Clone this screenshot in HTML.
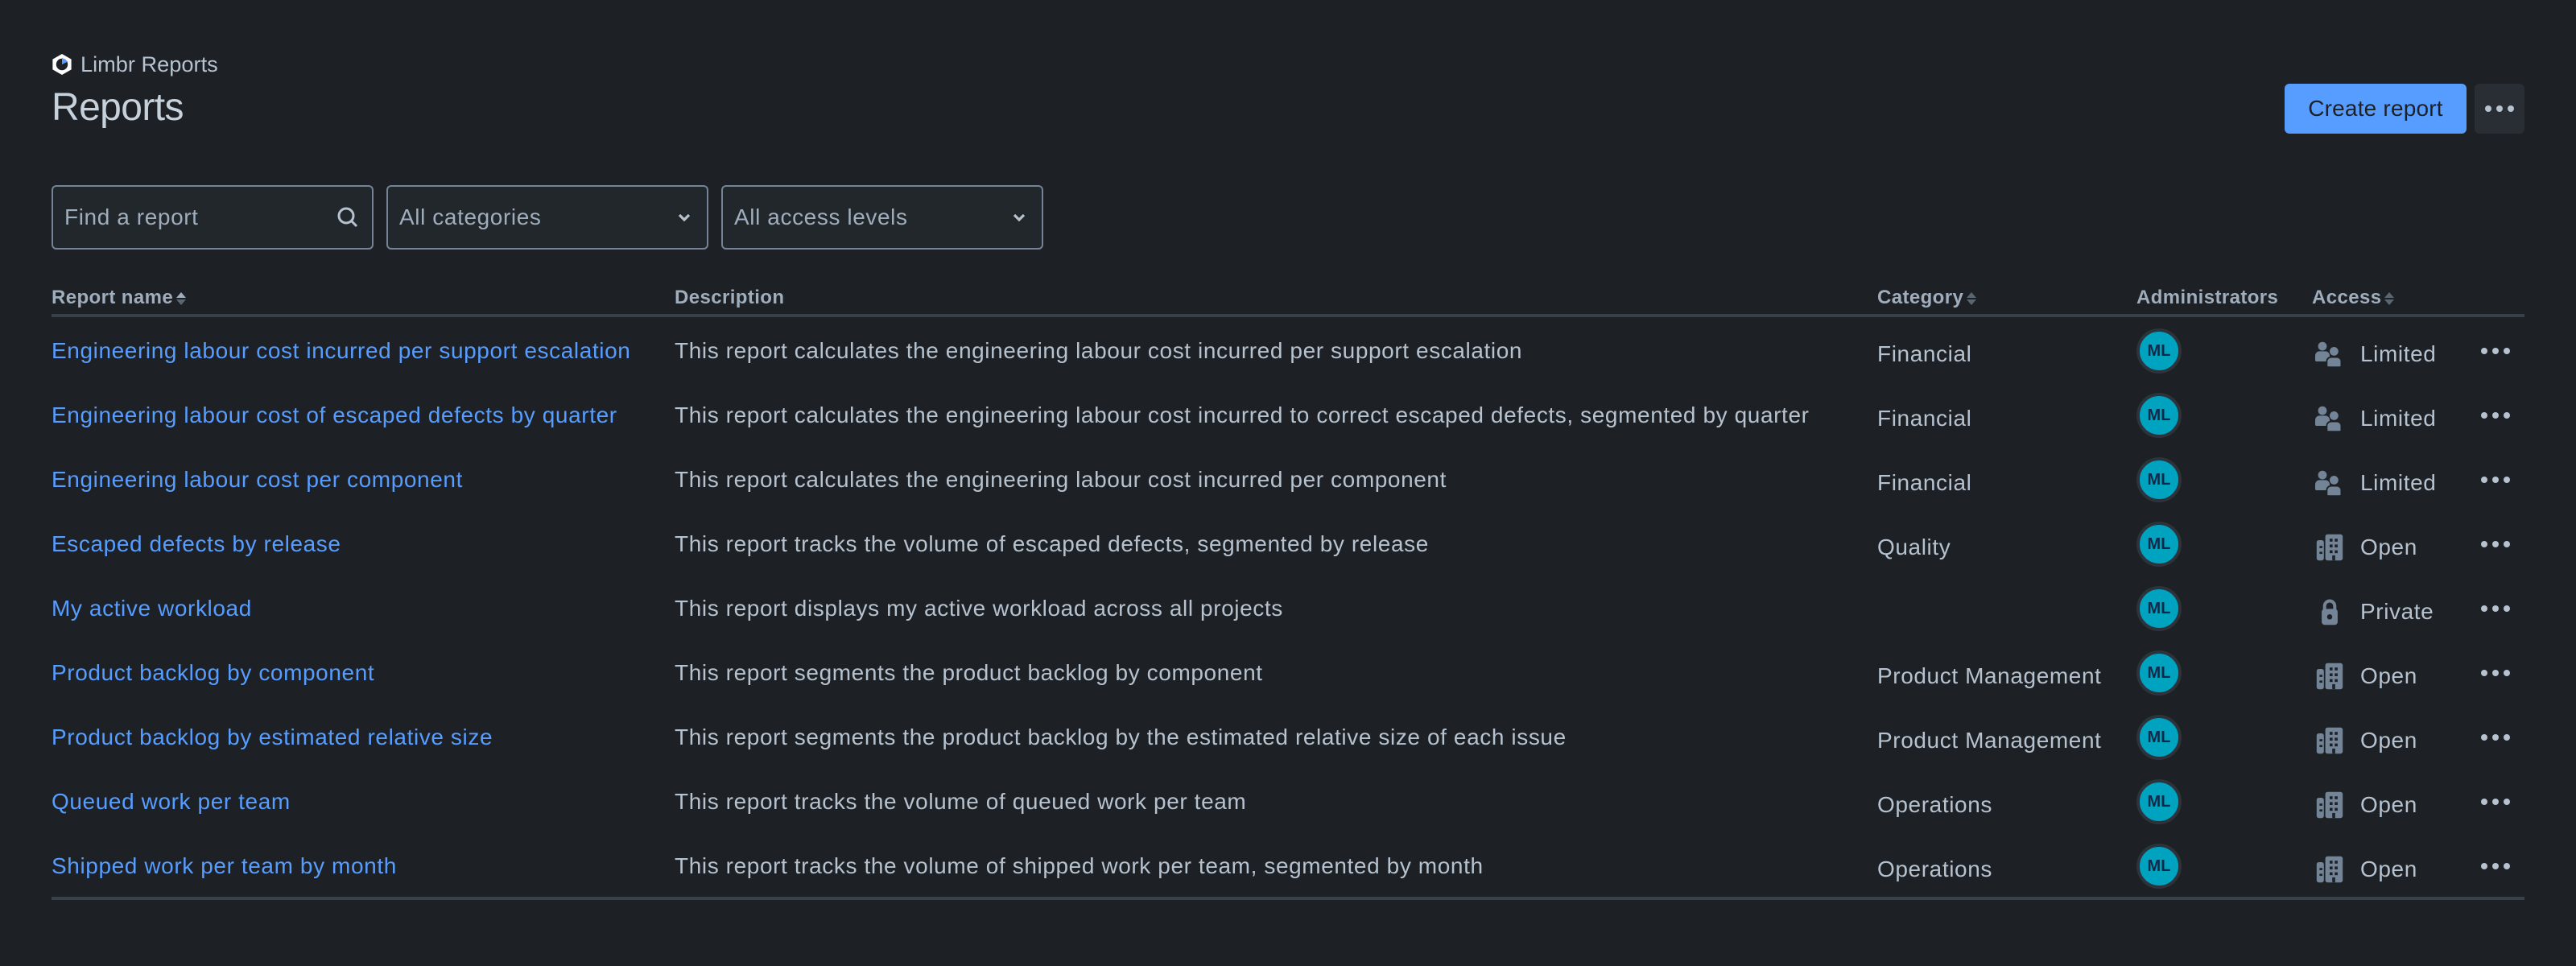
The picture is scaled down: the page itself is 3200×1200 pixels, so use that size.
<!DOCTYPE html>
<html><head><meta charset="utf-8">
<style>
html{zoom:2}
body{margin:0;width:1600px;height:600px;background:#1d2125;font-family:"Liberation Sans",sans-serif;color:#b6c2cf;position:relative;overflow:hidden;font-size:14px;letter-spacing:0.3px}
.abs{position:absolute}
.brand{left:32px;top:32px;font-size:13.6px;color:#b6c2cf;display:flex;align-items:center;gap:5px;letter-spacing:0}
h1{position:absolute;left:32px;top:53px;margin:0;font-size:24px;font-weight:500;color:#c7d1db;letter-spacing:-0.3px}
.btn{left:1419px;top:52px;width:113px;height:31px;background:#579dff;border-radius:3px;color:#1d2125;font-size:14px;display:flex;align-items:center;justify-content:center;font-weight:500;letter-spacing:0.1px}
.more{left:1537px;top:52px;width:31px;height:31px;background:#282e33;border-radius:3px;display:flex;align-items:center;justify-content:center}
.dots{display:flex;gap:3px}.dots i{width:4px;height:4px;border-radius:50%;background:#b6c2cf;display:block}
.inp{top:115px;border:1px solid #738496;border-radius:3px;background:#22272b;display:flex;align-items:center;justify-content:space-between;padding:0 8px 0 7px;box-sizing:border-box;width:200px;height:40px;color:#9fadbc;font-size:14px}
.th{top:178px;font-size:12px;font-weight:bold;color:#9fadbc;letter-spacing:0.2px}
.line{left:32px;width:1536px;height:2px;background:#38414a}
.row{position:absolute;left:0;width:1600px;height:40px}
.row span{position:absolute;top:50%;transform:translateY(-50%);white-space:nowrap}
.lk{left:32px;color:#579dff;margin-top:-2px}
.ds{left:419px;color:#b6c2cf;margin-top:-2px}
.ct{left:1166px}
.av{left:1327px;width:24px;height:24px;border-radius:50%;background:#00a3bf;border:2px solid #2c333a;color:#0c2a47;font-size:10px;font-weight:bold;display:flex;align-items:center;justify-content:center;margin-top:-2px;letter-spacing:0}
.ac{left:1438px;display:flex;align-items:center;gap:10px}
.rd{left:1541px;margin-top:-2px}
.sort{display:inline-block;vertical-align:middle;margin-left:2px;width:6px;height:8px}
</style></head><body>
<div class="abs brand"><svg width="13" height="14" viewBox="0 0 13 14"><path d="M6.5 0.5L12.3 3.8V10.2L6.5 13.5L0.7 10.2V3.8Z" fill="#fff"/><circle cx="6.5" cy="7" r="3.6" fill="#1d2125"/><path d="M6.5 7L6.5 2.8L10.2 5.2Z" fill="#579dff"/></svg>Limbr Reports</div>
<h1>Reports</h1>
<div class="abs btn">Create report</div>
<div class="abs more"><div class="dots"><i></i><i></i><i></i></div></div>
<div class="abs inp" style="left:32px">Find a report<svg width="14" height="14" viewBox="0 0 14 14"><circle cx="6" cy="6" r="4.5" fill="none" stroke="#b6c2cf" stroke-width="1.5"/><path d="M9.3 9.3L12.5 12.5" stroke="#b6c2cf" stroke-width="1.5"/></svg></div>
<div class="abs inp" style="left:240px">All categories<svg width="12" height="12" viewBox="0 0 12 12"><path d="M3 4.5L6 7.5L9 4.5" fill="none" stroke="#b6c2cf" stroke-width="1.6"/></svg></div>
<div class="abs inp" style="left:448px">All access levels<svg width="12" height="12" viewBox="0 0 12 12"><path d="M3 4.5L6 7.5L9 4.5" fill="none" stroke="#b6c2cf" stroke-width="1.6"/></svg></div>
<div class="abs th" style="left:32px">Report name<svg class="sort" viewBox="0 0 6 8"><path d="M0 3.5L3 0L6 3.5Z" fill="#9fadbc"/><path d="M0 4.5L3 8L6 4.5Z" fill="#596773"/></svg></div>
<div class="abs th" style="left:419px">Description</div>
<div class="abs th" style="left:1166px">Category<svg class="sort" viewBox="0 0 6 8"><path d="M0 3.5L3 0L6 3.5Z" fill="#596773"/><path d="M0 4.5L3 8L6 4.5Z" fill="#596773"/></svg></div>
<div class="abs th" style="left:1327px">Administrators</div>
<div class="abs th" style="left:1436px">Access<svg class="sort" viewBox="0 0 6 8"><path d="M0 3.5L3 0L6 3.5Z" fill="#596773"/><path d="M0 4.5L3 8L6 4.5Z" fill="#596773"/></svg></div>
<div class="abs line" style="top:195px"></div>
<div class="abs line" style="top:557px"></div>
<div id="rows"></div>
<script>
var data=[
["Engineering labour cost incurred per support escalation","This report calculates the engineering labour cost incurred per support escalation","Financial","L"],
["Engineering labour cost of escaped defects by quarter","This report calculates the engineering labour cost incurred to correct escaped defects, segmented by quarter","Financial","L"],
["Engineering labour cost per component","This report calculates the engineering labour cost incurred per component","Financial","L"],
["Escaped defects by release","This report tracks the volume of escaped defects, segmented by release","Quality","O"],
["My active workload","This report displays my active workload across all projects","","P"],
["Product backlog by component","This report segments the product backlog by component","Product Management","O"],
["Product backlog by estimated relative size","This report segments the product backlog by the estimated relative size of each issue","Product Management","O"],
["Queued work per team","This report tracks the volume of queued work per team","Operations","O"],
["Shipped work per team by month","This report tracks the volume of shipped work per team, segmented by month","Operations","O"]];
var icons={
L:'<svg width="18" height="18" viewBox="0 0 20 18"><circle cx="5" cy="3.5" r="3" fill="#738496"/><path d="M0 10a3 3 0 0 1 3-3h4a3 3 0 0 1 3 3v4H1a1 1 0 0 1-1-1Z" fill="#738496"/><circle cx="13" cy="7" r="3" fill="#738496"/><path d="M8 14a3 3 0 0 1 3-3h4a3 3 0 0 1 3 3v3a1 1 0 0 1-1 1H9a1 1 0 0 1-1-1Z" fill="#738496" stroke="#1d2125" stroke-width="1"/></svg>',
O:'<svg width="18" height="18" viewBox="0 0 20 18"><rect x="1" y="4" width="5" height="14" rx="1.5" fill="#738496"/><rect x="7" y="0" width="12" height="18" rx="1.5" fill="#738496"/><g fill="#1d2125"><rect x="3" y="8" width="2" height="1.5"/><rect x="3" y="12" width="2" height="1.5"/><rect x="10" y="3" width="2" height="2"/><rect x="13.5" y="3" width="2" height="2"/><rect x="10" y="7" width="2" height="2"/><rect x="13.5" y="7" width="2" height="2"/><rect x="10" y="11" width="2" height="2"/><rect x="13.5" y="11" width="2" height="2"/><rect x="11.8" y="14.5" width="2" height="3.5"/></g></svg>',
P:'<svg width="18" height="18" viewBox="0 0 20 18"><path d="M6.5 8V5a3.5 3.5 0 0 1 7 0v3" fill="none" stroke="#738496" stroke-width="2.2"/><rect x="4.5" y="7" width="11" height="11" rx="2" fill="#738496"/><circle cx="10" cy="12.5" r="1.8" fill="#1d2125"/></svg>'};
var names={L:"Limited",O:"Open",P:"Private"};
var h="";
data.forEach(function(d,i){
h+='<div class="row" style="top:'+(200+i*40)+'px"><span class="lk">'+d[0]+'</span><span class="ds">'+d[1]+'</span><span class="ct">'+d[2]+'</span><span class="av">ML</span><span class="ac">'+icons[d[3]]+names[d[3]]+'</span><span class="rd"><div class="dots"><i></i><i></i><i></i></div></span></div>';
});
document.getElementById("rows").innerHTML=h;
</script>
</body></html>
